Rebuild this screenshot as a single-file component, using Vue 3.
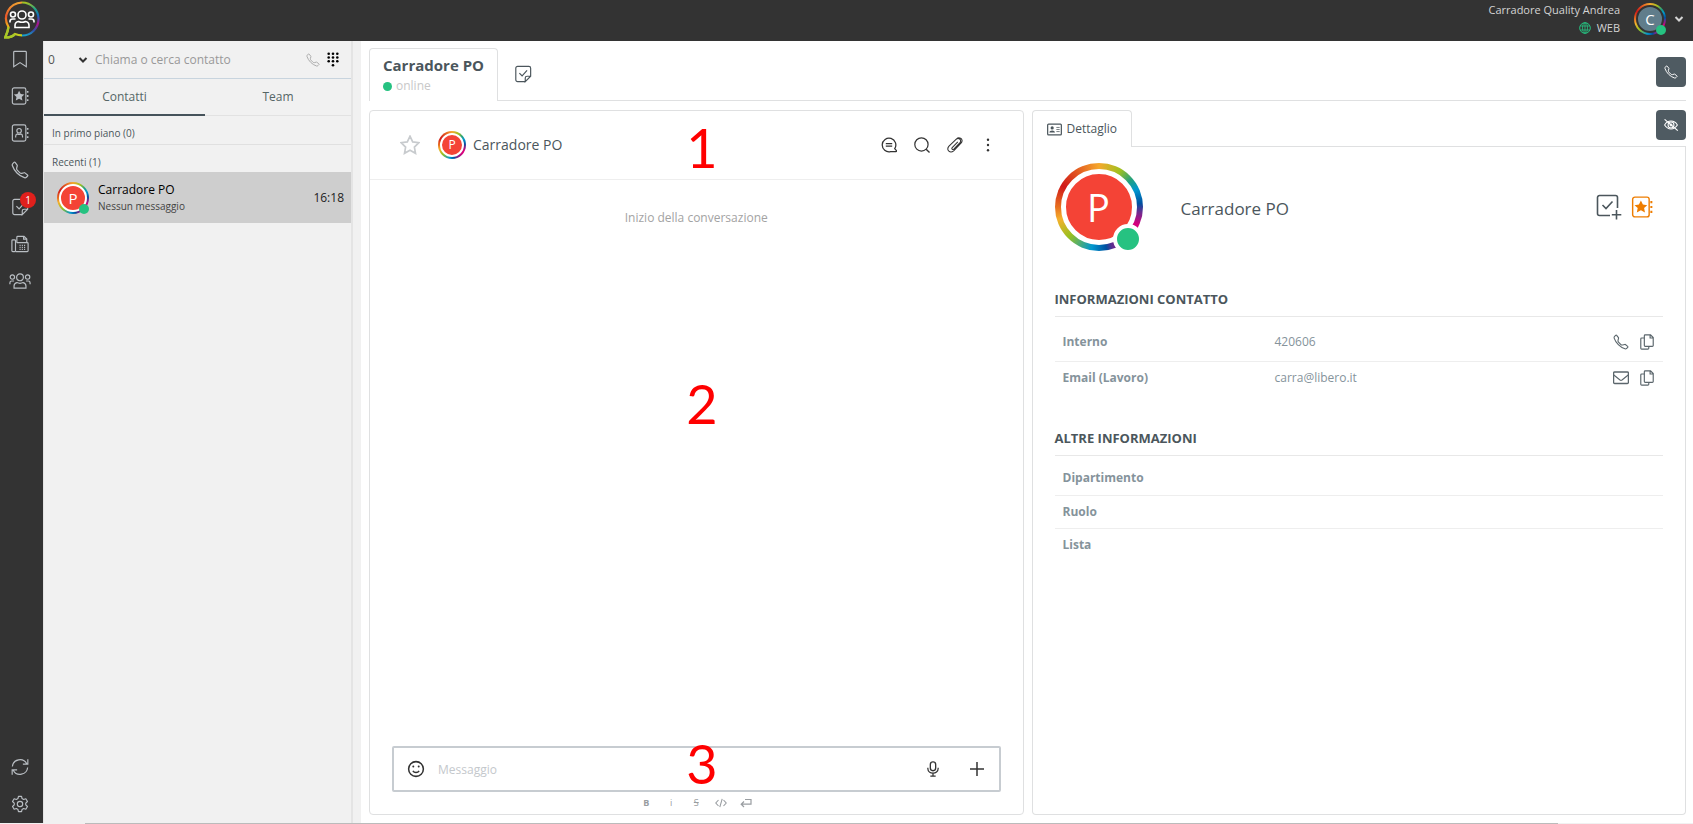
<script setup>
import { ref } from 'vue'

const mainNav = [
  { id: 'bookmark', label: 'Segnalibri' },
  { id: 'starbook', label: 'Preferiti' },
  { id: 'contact', label: 'Rubrica' },
  { id: 'phone', label: 'Chiamate' },
  { id: 'task', label: 'Attività', badge: 1 },
  { id: 'fax', label: 'Fax' },
  { id: 'people', label: 'Gruppi' }
]
const toolNav = [
  { id: 'refresh', label: 'Aggiorna' },
  { id: 'gear', label: 'Impostazioni' }
]
const chatActions = [
  { id: 'comment', label: 'Commenti' },
  { id: 'search', label: 'Cerca' },
  { id: 'clip', label: 'Allega' },
  { id: 'dots', label: 'Altro' }
]
const contactInfo = [
  { label: 'Interno', value: '420606', icon: 'phone', tall: true },
  { label: 'Email (Lavoro)', value: 'carra@libero.it', icon: 'mail' }
]
const otherInfo = ['Dipartimento', 'Ruolo', 'Lista']
const line = ref('0')
const query = ref('')
const message = ref('')
</script>

<template>
  <svg class="sprite" aria-hidden="true">
    <defs>
      <symbol id="bookmark" viewBox="0 0 20 20"><path d="M4 1.500h12a1 1 0 0 1 1 1V18.500l-7-4.500-7 4.500V2.500a1 1 0 0 1 1-1z" /></symbol>
      <symbol id="starbook" viewBox="0 0 20 20">
        <rect x="1.500" y="1" width="15" height="18" rx="2" />
        <path d="M18.500 4.500v2M18.500 9v2M18.500 13.500v2" stroke-width="1.800" />
        <path class="solid" d="m9 4.200 1.800 3.600 4 .5-2.900 2.700.8 4L9 13l-3.700 2 .8-4-2.900-2.700 4-.5z" />
      </symbol>
      <symbol id="contact" viewBox="0 0 20 20">
        <rect x="1.500" y="1" width="15" height="18" rx="2" />
        <path d="M18.500 4.500v2M18.500 9v2M18.500 13.500v2" stroke-width="1.800" />
        <circle cx="9" cy="7.500" r="2.500" /><path d="M5.200 15v-1.500c0-1.300.9-2.200 2-2.500.6.4 1.200.5 1.800.5s1.200-.1 1.800-.5c1.100.3 2 1.200 2 2.500V15" />
      </symbol>
      <symbol id="phone" viewBox="0 0 16 16"><path d="M3.654 1.328a.678.678 0 0 0-1.015-.063L1.605 2.300c-.483.484-.661 1.169-.45 1.770a17.600 17.600 0 0 0 4.168 6.608 17.600 17.600 0 0 0 6.608 4.168c.601.211 1.286.033 1.770-.45l1.034-1.034a.678.678 0 0 0-.063-1.015l-2.307-1.794a.68.68 0 0 0-.58-.122l-2.190.547a1.750 1.750 0 0 1-1.657-.459L5.482 8.062a1.750 1.750 0 0 1-.46-1.657l.548-2.190a.68.68 0 0 0-.122-.58z" stroke-width="1.100" /></symbol>
      <symbol id="task" viewBox="0 0 20 20"><path d="M12.500 18.500H4a2 2 0 0 1-2-2V3.500a2 2 0 0 1 2-2h12.500a2 2 0 0 1 2 2v9l-6 6v-4a2 2 0 0 1 2-2h4" /><path d="m6 9 3 3 5.500-6" /></symbol>
      <symbol id="taskplus" viewBox="0 0 26 26"><path d="M14 21.500H3.500a2 2 0 0 1-2-2v-16a2 2 0 0 1 2-2h16a2 2 0 0 1 2 2V14M20.500 16v9.500M15.800 20.800h9.500" stroke-width="1.600" /><path d="m6.500 11 3.500 3.500L16.500 7.500" stroke-width="1.600" /></symbol>
      <symbol id="fax" viewBox="0 0 20 20"><rect x="1" y="5.500" width="4" height="13" rx="1" /><path d="M6.500 8.500v-6a1 1 0 0 1 1-1h7l3 3v4" /><path d="M14 1.500v3h3.500" /><path d="M5 18.500h13a1 1 0 0 0 1-1v-8a1 1 0 0 0-1-1H6.500" /><path d="M9.500 11.500h1.200m1.300 0h1.200m1.300 0h1.200m-6.200 2.200h1.200m1.300 0h1.200m1.300 0h1.200m-6.200 2.200h1.200m1.300 0h1.200m1.300 0h1.200" stroke-width="1.400" /></symbol>
      <symbol id="people" viewBox="0 0 24 18"><circle cx="12" cy="5" r="3.700" /><circle cx="3.700" cy="4.700" r="2.400" /><circle cx="20.300" cy="4.700" r="2.400" /><path d="M5.500 16.700v-2.200a4 4 0 0 1 3-3.800c2.200 1 4.800 1 7 0a4 4 0 0 1 3 3.800v2.200z" /><path d="M1 12.500v-1.500a2 2 0 0 1 2-2h2.500M23 12.500v-1.500a2 2 0 0 0-2-2h-2.500" /></symbol>
      <symbol id="refresh" viewBox="0 0 20 20"><path d="M1.500 9.500A8.500 8.500 0 0 1 17.500 6.500M18.500 10.500A8.500 8.500 0 0 1 2.500 13.500M18.700 1.500v5.300h-5.500M1.300 18.500v-5.300h5.500" /></symbol>
      <symbol id="gear" viewBox="0 0 20 20"><circle cx="10" cy="10" r="3" /><path d="M8.300 1.500h3.400l.6 2.500 1.700 1 2.500-.8 1.800 3-1.900 1.800v2l1.900 1.800-1.800 3-2.500-.8-1.700 1-.6 2.500H8.300L7.700 16 6 15l-2.500.8-1.800-3L3.600 11V9L1.700 7.200l1.800-3L6 5l1.700-1z" stroke-linejoin="round" /></symbol>
      <symbol id="comment" viewBox="0 0 20 20"><path d="M17.200 14.500A8.500 8.500 0 1 0 12 18.200h6.800c.8 0 1-.7.500-1.200z" stroke-width="1.600" /><path d="M6 8.300h8M6 11.500h8" stroke-width="1.500" /></symbol>
      <symbol id="search" viewBox="0 0 20 20"><circle cx="9.300" cy="9.300" r="8.300" stroke-width="1.500" /><path d="m15.200 15.200 4.200 4.200" stroke-width="1.700" /></symbol>
      <symbol id="clip" viewBox="0 0 20 20"><path d="m13.500 6-7 7.200c-1.300 1.500.5 3.300 2 2l7.500-7.800c3-3.500-1.500-7.500-4.700-4.400L2.500 11.500c-4 4.800 1.600 9.600 5.800 5.700l9.200-9.500c2.200-2.500 1.500-5-.5-6.200-1.800-1-3.800-.6-5.200 1" stroke-width="1.300" /></symbol>
      <symbol id="dots" viewBox="0 0 20 20"><g class="solid"><circle cx="10" cy="3.500" r="1.500" /><circle cx="10" cy="10" r="1.500" /><circle cx="10" cy="16.500" r="1.500" /></g></symbol>
      <symbol id="star" viewBox="0 0 20 20"><path d="m10 1.200 2.700 5.700 6.200.8-4.500 4.400 1.100 6.200-5.500-3-5.500 3 1.100-6.200-4.500-4.400 6.200-.8z" stroke-width="1.700" /></symbol>
      <symbol id="keypad" viewBox="0 0 12 15"><g class="solid"><circle cx="1.700" cy="1.700" r="1.300" /><circle cx="6" cy="1.700" r="1.300" /><circle cx="10.300" cy="1.700" r="1.300" /><circle cx="1.700" cy="5.500" r="1.300" /><circle cx="6" cy="5.500" r="1.300" /><circle cx="10.300" cy="5.500" r="1.300" /><circle cx="1.700" cy="9.300" r="1.300" /><circle cx="6" cy="9.300" r="1.300" /><circle cx="10.300" cy="9.300" r="1.300" /><circle cx="6" cy="13.200" r="1.300" /></g></symbol>
      <symbol id="chevron" viewBox="0 0 10 8"><path d="m1.500 2 3.500 3.500L8.500 2" stroke-width="2" /></symbol>
      <symbol id="globe" viewBox="0 0 12 12"><circle cx="6" cy="6" r="5.300" stroke-width="1" /><ellipse cx="6" cy="6" rx="2.500" ry="5.300" stroke-width=".8" /><path d="M1.300 4h9.400M1.300 8h9.400M6 1v10" stroke-width=".8" /></symbol>
      <symbol id="eyeoff" viewBox="0 0 20 16"><path d="M2 8c4-6.500 12-6.500 16 0-4 6.500-12 6.500-16 0z" /><circle cx="10" cy="8" r="3.700" /><circle cx="10" cy="8" r="1.200" /><path d="m2 1 16.500 14" stroke-width="1.500" /></symbol>
      <symbol id="card" viewBox="0 0 16 13"><rect x=".7" y=".7" width="14.600" height="11.600" rx="1" /><g class="solid"><circle cx="5.500" cy="4.800" r="1.700" /><path d="M2.500 9.700c0-3 6-3 6 0z" /></g><path d="M10 4.300h3.500M10 6.500h3.500M10 8.700h3.500" stroke-width=".8" /></symbol>
      <symbol id="mail" viewBox="0 0 16 14"><rect x=".6" y="1" width="14.800" height="11.500" rx="1" /><path d="m.8 4 6.200 5c.7.500 1.300.5 2 0l6.200-5" stroke-width="1.100" /></symbol>
      <symbol id="copy" viewBox="0 0 16 18"><path d="M5 4.500H2a1 1 0 0 0-1 1V16a1 1 0 0 0 1 1h7a1 1 0 0 0 1-1v-2" /><path d="M6 1h6l3 3v9a1 1 0 0 1-1 1H6a1 1 0 0 1-1-1V2a1 1 0 0 1 1-1zM11.500 1v3.500H15" /></symbol>
      <symbol id="smile" viewBox="0 0 20 20"><circle cx="10" cy="10" r="8.200" stroke-width="1.700" /><circle class="solid" cx="7" cy="7.300" r="1.100" /><circle class="solid" cx="13" cy="7.300" r="1.100" /><path d="M6.500 12c1.500 2.400 5.500 2.400 7 0" stroke-width="1.600" /></symbol>
      <symbol id="mic" viewBox="0 0 14 18"><rect x="4" y="1" width="6" height="10" rx="3" stroke-width="1.500" /><path d="M1.200 7.500v1c0 7 11.600 7 11.600 0v-1M7 14v3M4 17h6" stroke-width="1.400" /></symbol>
      <symbol id="plus" viewBox="0 0 14 14"><path d="M7 0v14M0 7h14" stroke-width="1.500" /></symbol>
      <symbol id="code" viewBox="0 0 12 10"><path d="M3.500 2 .8 5l2.700 3M8.500 2l2.700 3-2.700 3M7.200.8 4.800 9.200" stroke-width="1.100" /></symbol>
      <symbol id="enter" viewBox="0 0 12 10"><path d="M5 1.500h6v4.700H1.500M4 3.500 1.200 6.200 4 9" stroke-width="1.200" /></symbol>
      <symbol id="logo" viewBox="0 0 36 38">
        <linearGradient id="rainbow-l" x1="0" y1="0" x2="0" y2="1"><stop offset="0" stop-color="#f0a030" /><stop offset=".4" stop-color="#e8542a" /><stop offset=".68" stop-color="#f2b21c" /><stop offset=".9" stop-color="#c4cc20" /></linearGradient>
        <linearGradient id="rainbow-r" x1="0" y1="0" x2="0" y2="1"><stop offset="0" stop-color="#a8c020" /><stop offset=".2" stop-color="#1ca48c" /><stop offset=".4" stop-color="#1268c0" /><stop offset=".65" stop-color="#b0108c" /><stop offset=".85" stop-color="#3050a8" /><stop offset="1" stop-color="#18a0c8" /></linearGradient>
        <path d="M18 1.500C5 2-2 15.500 4.500 26 4 30 3 32.500 1.200 36.500 6 36.500 9 35.500 11 33c2.500 1 4.500 1.400 7 1.400" stroke="url(#rainbow-l)" stroke-width="2.200" />
        <path d="M18 1.500a16.500 16.500 0 0 1 0 33" stroke="url(#rainbow-r)" stroke-width="2.200" />
        <path d="M4.500 26C4 30 3 32.500 1.200 36.500 6 36.500 9 35.500 11 33" stroke="#a8c828" stroke-width="2.200" />
        <g stroke="#fff" stroke-width="1.600"><circle cx="18" cy="14" r="4" /><circle cx="9" cy="13.500" r="2.500" /><circle cx="27" cy="13.500" r="2.500" /><path d="M11 26.500v-2.200a4 4 0 0 1 3.500-3.800c2.200 1 4.800 1 7 0a4 4 0 0 1 3.500 3.800v2.200zM6 21.500v-1a2.500 2.500 0 0 1 2.500-2.500h3M30 21.500v-1a2.500 2.500 0 0 0-2.500-2.500h-3" /></g>
      </symbol>
    </defs>
  </svg>

  <div class="app">
    <header class="topbar">
      <svg class="logo"><use href="#logo" /></svg>
      <div class="account">
        <div class="identity">
          <span>Carradore Quality Andrea</span>
          <span class="channel"><svg class="i12 green"><use href="#globe" /></svg>WEB</span>
        </div>
        <div class="avatar medium user"><span class="face">C</span><i class="presence"></i></div>
        <button class="plain" aria-label="Menu utente"><svg class="chev"><use href="#chevron" /></svg></button>
      </div>
    </header>

    <nav class="rail">
      <button v-for="n in mainNav" :key="n.id" class="plain rail-item" :aria-label="n.label">
        <svg :class="n.id === 'people' ? 'i22' : 'i18'"><use :href="'#' + n.id" /></svg>
        <span v-if="n.badge" class="badge">{{ n.badge }}</span>
      </button>
      <div class="spacer"></div>
      <button v-for="n in toolNav" :key="n.id" class="plain rail-item" :aria-label="n.label">
        <svg class="i18"><use :href="'#' + n.id" /></svg>
      </button>
    </nav>

    <aside class="sidebar">
      <form class="dial" @submit.prevent>
        <div class="line-pick">
          <select v-model="line" aria-label="Linea"><option>0</option></select>
          <svg class="chev"><use href="#chevron" /></svg>
        </div>
        <input v-model="query" type="text" placeholder="Chiama o cerca contatto" aria-label="Chiama o cerca contatto" />
        <button class="plain call" aria-label="Chiama"><svg class="i14"><use href="#phone" /></svg></button>
        <button class="plain pad" aria-label="Tastiera"><svg class="keypad"><use href="#keypad" /></svg></button>
      </form>
      <div class="side-tabs">
        <button class="plain active">Contatti</button>
        <button class="plain">Team</button>
      </div>
      <h2 class="group">In primo piano (0)</h2>
      <h2 class="group last">Recenti (1)</h2>
      <button class="plain chat-row">
        <span class="avatar medium"><span class="face">P</span><i class="presence"></i></span>
        <span class="chat-text"><span class="chat-name">Carradore PO</span><span class="chat-sub">Nessun messaggio</span></span>
        <span class="chat-time">16:18</span>
      </button>
    </aside>

    <main class="main">
      <div class="tabs">
        <button class="plain tab">
          <span class="tab-title">Carradore PO</span>
          <span class="status"><i></i>online</span>
        </button>
        <button class="plain tab-icon" aria-label="Attività"><svg class="i18"><use href="#task" /></svg></button>
        <button class="plain square" aria-label="Chiama"><svg class="i14"><use href="#phone" /></svg></button>
      </div>

      <div class="columns">
        <section class="chat">
          <header class="chat-head">
            <button class="plain star" aria-label="Preferito"><svg class="i20"><use href="#star" /></svg></button>
            <div class="avatar small"><span class="face">P</span></div>
            <span class="head-name">Carradore PO</span>
            <div class="head-actions">
              <button v-for="a in chatActions" :key="a.id" class="plain" :aria-label="a.label"><svg class="i16"><use :href="'#' + a.id" /></svg></button>
            </div>
            <span class="mark">1</span>
          </header>
          <div class="thread">
            <p>Inizio della conversazione</p>
            <span class="mark">2</span>
          </div>
          <footer class="compose">
            <div class="box">
              <button class="plain" aria-label="Emoji"><svg class="i18"><use href="#smile" /></svg></button>
              <input v-model="message" type="text" placeholder="Messaggio" aria-label="Messaggio" />
              <button class="plain wide" aria-label="Messaggio vocale"><svg class="i16"><use href="#mic" /></svg></button>
              <button class="plain wide" aria-label="Aggiungi"><svg class="i14"><use href="#plus" /></svg></button>
            </div>
            <div class="format">
              <button class="plain bold">B</button>
              <button class="plain">i</button>
              <button class="plain strike">S</button>
              <button class="plain" aria-label="Codice"><svg class="wide-glyph"><use href="#code" /></svg></button>
              <button class="plain" aria-label="A capo"><svg class="wide-glyph"><use href="#enter" /></svg></button>
            </div>
            <span class="mark">3</span>
          </footer>
        </section>

        <section class="detail">
          <div class="detail-tabs">
            <button class="plain detail-tab"><svg class="card-icon"><use href="#card" /></svg>Dettaglio</button>
            <button class="plain square" aria-label="Nascondi"><svg class="i16"><use href="#eyeoff" /></svg></button>
          </div>
          <div class="detail-body">
            <div class="profile">
              <div class="avatar large"><span class="face">P</span><i class="presence"></i></div>
              <h1>Carradore PO</h1>
              <button class="plain" aria-label="Nuova attività"><svg class="i26"><use href="#taskplus" /></svg></button>
              <button class="plain orange" aria-label="Preferito"><svg class="i22"><use href="#starbook" /></svg></button>
            </div>
            <h3>INFORMAZIONI CONTATTO</h3>
            <table>
              <tbody>
                <tr v-for="r in contactInfo" :key="r.label" :class="{ tall: r.tall }">
                  <th scope="row">{{ r.label }}</th>
                  <td>{{ r.value }}</td>
                  <td class="row-actions">
                    <div>
                      <button class="plain" :aria-label="r.icon === 'mail' ? 'Scrivi' : 'Chiama'"><svg class="i16"><use :href="'#' + r.icon" /></svg></button>
                      <button class="plain" aria-label="Copia"><svg class="i16"><use href="#copy" /></svg></button>
                    </div>
                  </td>
                </tr>
              </tbody>
            </table>
            <h3 class="second">ALTRE INFORMAZIONI</h3>
            <table>
              <tbody>
                <tr v-for="o in otherInfo" :key="o"><th scope="row">{{ o }}</th><td></td><td></td></tr>
              </tbody>
            </table>
          </div>
        </section>
      </div>
    </main>
    <div class="edge"></div>
  </div>
</template>

<style>
body { margin: 0; }
</style>

<style scoped>
* { box-sizing: border-box; }
.app {
  display: grid;
  grid-template: 41px minmax(0, 1fr) 1px / 43px 310px minmax(0, 1fr);
  height: 100vh;
  background: #f1f1f1;
  color: #4b565c;
  font: 13px/18px "Open Sans", "Noto Sans", sans-serif;
}
.sprite { position: absolute; width: 0; height: 0; }
svg { display: block; flex: none; fill: none; stroke: currentColor; stroke-width: 1.3; }
.solid { fill: currentColor; stroke: none; }
.plain { padding: 0; border: 0; background: none; color: inherit; font: inherit; display: flex; align-items: center; justify-content: center; }
h1, h2, h3, p { margin: 0; }
.i12 { width: 12px; height: 12px; }
.i14 { width: 14px; height: 14px; }
.i16 { width: 16px; height: 16px; }
.i18 { width: 18px; height: 18px; }
.i20 { width: 20px; height: 20px; }
.i22 { width: 22px; height: 22px; }
.i26 { width: 26px; height: 26px; }
.chev { width: 10px; height: 8px; }

.topbar { grid-column: 1 / -1; display: flex; align-items: center; justify-content: space-between; padding: 0 9px 4px 4px; background: #333; color: #d4d4d4; }
.logo { align-self: flex-start; width: 36px; height: 40px; }
.account { display: flex; align-items: center; gap: 8px; }
.identity { display: flex; flex-direction: column; align-items: flex-end; margin-right: 6px; font-size: 11px; }
.channel { display: flex; align-items: center; gap: 6px; }
.green { color: #26c281; }

.avatar { --ring: 2px; --gap: 2px; position: relative; flex: none; padding: var(--ring); border-radius: 50%; background: conic-gradient(#f5a82c, #a0c020 30deg, #22a080 50deg, #0098d0 65deg, #0050a0 85deg, #6a2c90 97deg, #d8007c 115deg, #d8007c 130deg, #5a3090 162deg, #0050a0 170deg, #0098d0 190deg, #98c020 225deg, #f5b02c 253deg, #e87020 270deg, #d01818 300deg, #e05020 325deg, #f5a82c); }
.face { display: flex; align-items: center; justify-content: center; width: 100%; height: 100%; border: var(--gap) solid #fff; border-radius: 50%; background: #f44336; color: #fff; }
.presence { position: absolute; right: 0; bottom: 0; width: 10px; height: 10px; border-radius: 50%; background: #26c281; }
.small { width: 28px; height: 28px; }
.small .face { font-size: 12px; }
.medium { width: 32px; height: 32px; }
.medium .face { font-size: 15px; }
.user .face { border-color: #333; background: #607d8b; }
.large { --ring: 6px; --gap: 5px; width: 88px; height: 88px; }
.large .face { font-size: 38px; }
.large .presence { bottom: -3px; width: 30px; height: 30px; border: 4px solid #fff; }

.rail { display: flex; flex-direction: column; padding-bottom: 1px; background: #333; color: #b9bec3; }
.rail-item { position: relative; width: 39px; height: 37px; }
.rail-item:first-child { height: 36px; }
.badge { position: absolute; left: 20px; top: 4px; width: 16px; height: 16px; border-radius: 50%; background: #e0201c; color: #fff; font-size: 10px; line-height: 16px; }
.spacer { flex: 1; }

.sidebar { border-left: 1px solid #e4e4e4; border-right: 2px solid #e4e4e4; background: #f1f1f1; }
.dial { display: flex; align-items: center; height: 38px; border-bottom: 1px solid #c8d4de; }
.line-pick { position: relative; display: flex; align-items: center; width: 51px; }
.line-pick select { appearance: none; width: 100%; padding: 0 0 0 4px; border: 0; background: none; color: #555; font: 12px "Open Sans", "Noto Sans", sans-serif; }
.line-pick .chev { position: absolute; right: 7px; color: #333; pointer-events: none; }
input { flex: 1; min-width: 0; padding: 0; border: 0; outline: 0; background: none; color: #4b565c; font: 12px "Open Sans", "Noto Sans", sans-serif; }
input::placeholder { color: #999; opacity: 1; }
.call { width: 20px; color: #aaa; }
.pad { width: 20px; margin-right: 8px; color: #000; }
.keypad { width: 12px; height: 15px; }
.side-tabs { display: grid; grid-template-columns: 161px 1fr; height: 37px; font-size: 12px; color: #566; }
.side-tabs button { border-bottom: 1px solid #e2e2e2; }
.side-tabs .active { border-bottom: 2px solid #46535b; }
.group { height: 29px; padding-left: 8px; border-bottom: 1px solid #e0e0e0; font-size: 10px; font-weight: 400; line-height: 34px; }
.group.last { height: 27px; border-bottom: 0; }
.chat-row { width: 100%; height: 51px; padding: 0 7px 0 13px; background: #cecece; text-align: left; }
.chat-text { display: flex; flex-direction: column; flex: 1; margin-left: 9px; font-size: 10px; line-height: 16px; color: #444; }
.chat-name { font-size: 12px; color: #000; }
.chat-time { font-size: 12px; color: #222; }

.main { display: flex; flex-direction: column; min-width: 0; margin-left: 8px; padding: 7px 7px 8px 8px; background: #fff; }
.tabs { display: flex; align-items: stretch; height: 53px; border-bottom: 1px solid #dfe0e1; }
.tab { flex-direction: column; align-items: flex-start; gap: 2px; height: 53px; padding: 0 13px; border: 1px solid #dfe0e1; border-bottom: 0; border-radius: 4px 4px 0 0; background: #fff; }
.tab-title { font-size: 15px; font-weight: 700; line-height: 20px; }
.status { display: flex; align-items: center; gap: 4px; color: #c8c8c8; font-size: 12px; }
.status i { width: 9px; height: 9px; border-radius: 50%; background: #26c281; }
.tab-icon { width: 50px; }
.square { align-self: center; flex: none; width: 30px; height: 30px; margin-left: auto; border-radius: 4px; background: #4f5b62; color: #fff; }
.tabs .square { margin-bottom: 4px; }
.columns { display: grid; grid-template-columns: minmax(0, 1fr) minmax(0, 1fr); gap: 8px; flex: 1; min-height: 0; margin-top: 9px; }
.chat { display: flex; flex-direction: column; border: 1px solid #dfe0e1; border-radius: 4px; }
.chat-head { position: relative; display: flex; align-items: center; height: 69px; padding: 0 18px 0 30px; border-bottom: 1px solid #eee; }
.star { margin-right: 18px; color: #c8cbce; }
.head-name { flex: 1; margin-left: 7px; font-size: 14px; }
.head-actions { display: flex; color: #333; }
.head-actions button { width: 33px; height: 32px; }
.thread { position: relative; flex: 1; padding-top: 29px; text-align: center; font-size: 12px; color: #a3a3a3; }
.mark { position: absolute; top: 5px; left: calc(50% - 10px); color: #f00; font: 54px/64px Lato, sans-serif; pointer-events: none; }
.thread .mark { top: 34%; }
.compose { position: relative; padding: 0 22px; }
.compose .mark { top: -14px; }
.box { display: flex; align-items: center; height: 46px; padding: 0 0 0 13px; border: 2px solid #c7ccd1; border-radius: 2px; color: #333; }
.box input { margin-left: 13px; }
.box input::placeholder { color: #c4c8cc; }
.wide { width: 44px; height: 40px; }
.format { display: flex; justify-content: center; height: 22px; color: #999da1; font-size: 9px; }
.format button { width: 25px; }
.bold { font-weight: 700; }
.strike { text-decoration: line-through; }
.wide-glyph { width: 12px; height: 10px; }

.detail { display: flex; flex-direction: column; min-width: 0; }
.detail-tabs { display: flex; height: 37px; border-bottom: 1px solid #dfe0e1; }
.detail-tab { height: 37px; padding: 0 14px; gap: 5px; border: 1px solid #dfe0e1; border-bottom: 0; border-radius: 4px 4px 0 0; background: #fff; font-size: 12px; }
.card-icon { width: 15px; height: 13px; }
.detail-tabs .square { align-self: flex-start; }
.detail-body { flex: 1; padding: 16px 22px 0; border: 1px solid #dfe0e1; border-top: 0; border-radius: 0 0 4px 4px; }
.profile { display: flex; align-items: center; gap: 9px; padding: 0 10px 32px 0; }
h1 { flex: 1; margin-left: 29px; padding-top: 4px; font-size: 17px; font-weight: 500; line-height: 24px; }
.orange { color: #ee7d00; }
h3 { height: 34px; border-bottom: 1px solid #e8e8e8; font-size: 13px; font-weight: 700; line-height: 32px; }
.second { margin-top: 28px; }
table { width: 100%; margin-top: 6px; border-collapse: collapse; table-layout: fixed; font-size: 12px; color: #85939b; }
tr { height: 33px; }
.tall { height: 38px; }
tr + tr { border-top: 1px solid #eee; }
th, td { padding: 0; text-align: left; }
th { width: 220px; padding-left: 8px; font-weight: 700; }
.row-actions div { display: flex; justify-content: flex-end; gap: 10px; padding-right: 8px; color: #5b666c; }

.edge { grid-column: 1 / -1; margin: 0 8% 0 5%; background: #bbb; }
</style>
